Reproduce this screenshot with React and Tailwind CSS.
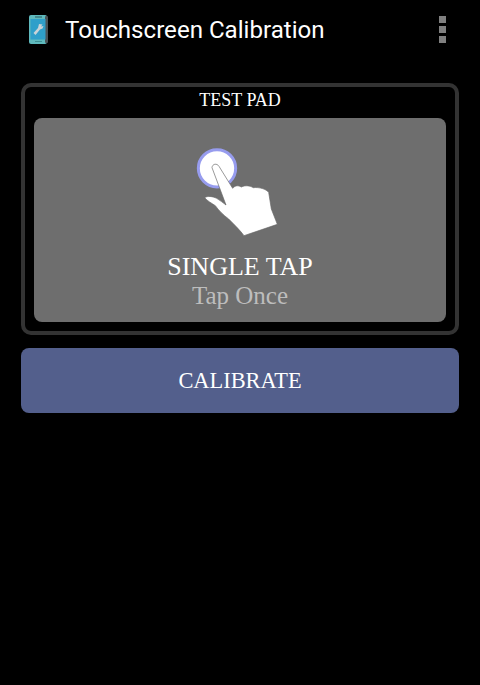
import React from 'react';

const serif = "font-['Liberation_Serif',serif]";

const AppIcon = () => (
  <svg width="19" height="29" viewBox="0 0 19 29">
    <rect x="0" y="0" width="18" height="29" rx="2" fill="#5fb9bd" />
    <rect x="16" y="1" width="3" height="27" rx="1" fill="#4b5358" />
    <rect x="1.5" y="4" width="15" height="20.5" fill="#2f9fca" />
    <rect x="6" y="1.5" width="7" height="1" fill="#2a5a60" />
    <rect x="6" y="26" width="7" height="1" fill="#3d8f93" />
    <path d="M4.5 18 L9 13 L10 9 L13.5 9.5 L12 11.5 L14.5 11 L13.5 13.5 L11 14.5 L6.5 20 Z" fill="#c9d3d8" />
  </svg>
);

const HandIcon = () => (
  <svg width="130" height="110" viewBox="0 0 390 330" className="mr-[10px]">
    <circle cx="141" cy="100" r="56" fill="#fff" stroke="#979cee" strokeWidth="9" />
    <path
      d="M126 98 C127 86 141 84 147 94 L188 160 C194 152 204 150 214 156 C226 150 240 152 250 158 C268 156 288 162 296 172 L304 222 L322 268 L222 302 C212 288 196 272 176 252 C160 240 146 226 136 212 C124 204 112 198 104 188 C112 182 128 184 140 190 C150 196 160 204 168 210 Z"
      fill="#fff"
      stroke="#666"
      strokeWidth="2"
    />
  </svg>
);

export default function App() {
  return (
    <div className="w-[480px] h-[685px] bg-black flex flex-col">
      <div className="h-[59px] flex items-center pl-[29px] pr-[34px] shrink-0">
        <AppIcon />
        <span className="ml-[17px] pt-[1px] text-[24.1px] text-white font-['Roboto',sans-serif]">Touchscreen Calibration</span>
        <div className="ml-auto flex flex-col gap-[3px]">
          <div className="w-[7px] h-[7px] bg-[#808080]" />
          <div className="w-[7px] h-[7px] bg-[#808080]" />
          <div className="w-[7px] h-[7px] bg-[#808080]" />
        </div>
      </div>

      <div className="mt-[24px] mx-[21px] h-[252px] border-4 border-[#333333] rounded-[10px] px-[9px] pb-[9px] flex flex-col">
        <div className={`h-[27px] flex items-center justify-center text-white text-[18px] ${serif}`}>TEST PAD</div>
        <div className="mt-[4px] flex-1 bg-[#6e6e6e] rounded-[8px] flex flex-col items-center pt-[17px]">
          <HandIcon />
          <div className={`mt-[7px] text-[26px] leading-[30px] text-white ${serif}`}>SINGLE TAP</div>
          <div className={`text-[25px] leading-[28px] text-[#bdbdbd] ${serif}`}>Tap Once</div>
        </div>
      </div>

      <button className={`mt-[13px] mx-[21px] h-[65px] bg-[#535f8c] rounded-[8px] text-white text-[22.4px] ${serif}`}>
        CALIBRATE
      </button>
    </div>
  );
}
